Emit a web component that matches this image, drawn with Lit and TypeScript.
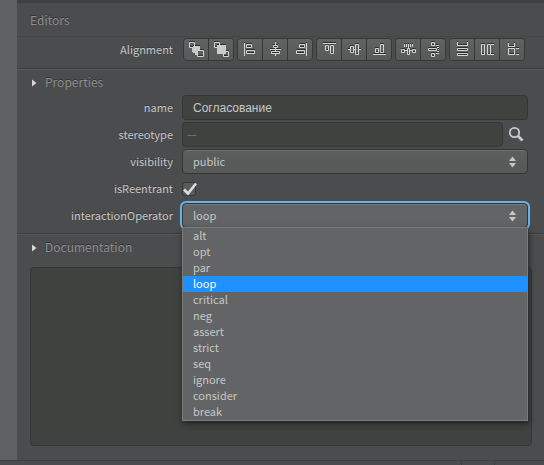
import { LitElement, html, css, svg } from "lit";
import { customElement, state } from "lit/decorators.js";
import { classMap } from "lit/directives/class-map.js";

const line = (d: string) => svg`<path class="line" d=${d} />`;
const fill = (d: string) => svg`<path class="fill" d=${d} />`;

const groups = [
  [
    { label: "Bring to front", art: [line("M0.5 0.5h5v5h-5zM8.5 8.5h6v6h-6z"), fill("M4 4h7v4H8v3H4zM3 6h1v3h1v1H3zM6 11h2v2H6z")] },
    { label: "Send to back", art: [line("M0.5 0.5h5v5h-5zM9.5 9.5h5v5h-5z"), fill("M3 3h9v9H3z")] },
  ],
  [
    { label: "Align left", art: [line("M1.5 1v13M3.5 2.5h5v3h-5zM3.5 8.5h8v3h-8z")] },
    { label: "Align center", art: [line("M7.5 0v3M7.5 6v3M7.5 12v2M5.5 3.5h4v2h-4zM3.5 9.5h8v2h-8zM2 7.5h11")] },
    { label: "Align right", art: [line("M13.5 1v13M6.5 2.5h5v3h-5zM3.5 8.5h8v3h-8z")] },
  ],
  [
    { label: "Align top", art: [line("M1 1.5h13M3.5 3.5h3v5h-3zM8.5 3.5h3v8h-3z")] },
    { label: "Align middle", art: [line("M1 7.5h2M6 7.5h3M12 7.5h2M3.5 4.5h3v6h-3zM8.5 2.5h3v10h-3z")] },
    { label: "Align bottom", art: [line("M1 12.5h13M3.5 6.5h3v4h-3zM8.5 2.5h3v8h-3z")] },
  ],
  [
    { label: "Distribute horizontally", art: [line("M3.5 2v3M5.5 2v3M7.5 2v4M9.5 2v3M11.5 2v3M0.5 7.5h3v3h-3zM6.5 6.5h2v6h-2zM11.5 7.5h3v3h-3zM4 8.500h2M9 8.500h2")] },
    { label: "Distribute vertically", art: [line("M5.5 0.5h3v3h-3zM2.5 6.5h8v2h-8zM5.5 11.5h3v3h-3zM10 3.5h3M11 5.500h2M12 7.5h1M11 9.5h2M10 11.5h3")] },
  ],
  [
    { label: "Same width", art: [line("M2.5 0v3M12.5 0v3M2 3.5h11M2.5 6.5h10v2h-10zM2.5 11.5h10v2h-10z")] },
    { label: "Same height", art: [line("M1.5 2.5h3v10h-3zM7.5 2.5h3v10h-3zM11 2.5h3M11 12.5h3")] },
    { label: "Same size", art: [line("M3.5 1v4M9.5 1v4M3.5 6.5h6v6h-6zM3 4.5h7M11 6.5h3M11 12.5h3")] },
  ],
];

const operators = ["alt", "opt", "par", "loop", "critical", "neg", "assert", "strict", "seq", "ignore", "consider", "break"];

@customElement("app-root")
export class AppRoot extends LitElement {
  @state() private operator = "loop";

  static styles = css`
    :host {
      display: flex;
      flex-direction: column;
      min-height: 100vh;
      background: #4b4c4e;
      color: #c6c8c8;
      font: 11px/16px "Noto Sans CJK SC", "Liberation Sans", sans-serif;
    }
    * { box-sizing: border-box; }
    button, input, select, textarea { font: inherit; color: inherit; margin: 0; }
    .main { flex: 1; display: flex; }
    .gutter { width: 17px; background: #5f6062; }
    .panel {
      flex: 1;
      min-width: 0;
      display: flex;
      flex-direction: column;
      border-top: 3px solid #3a4342;
    }
    h1, h2 {
      margin: 0;
      font-weight: 400;
      font-size: 12px;
      line-height: 20px;
      color: #8d8e8f;
      text-shadow: 0 -1px 0 #333;
    }
    h1 { padding: 7px 13px 6px; border-bottom: 1px solid #454648; }
    h2 { padding-bottom: 2px; }
    .row {
      display: grid;
      grid-template-columns: 156px minmax(0, 1fr);
      column-gap: 9px;
      align-items: center;
      min-height: 27px;
      padding-right: 16px;
    }
    .label { text-align: right; padding-bottom: 2px; text-shadow: 0 -1px 0 #3a3a3a; }
    .align { min-height: 31px; padding-bottom: 6px; }
    .tools { display: flex; gap: 3px; padding-left: 1px; }
    .group {
      display: flex;
      border: 1px solid #363837;
      border-radius: 4px;
      overflow: hidden;
    }
    .tool {
      width: 24px;
      height: 21px;
      padding: 0;
      border: 0;
      background: linear-gradient(#616362, #585a59);
      display: grid;
      place-items: center;
    }
    .tool + .tool { width: 25px; border-left: 1px solid #363837; }
    svg { display: block; overflow: visible; }
    .line { fill: none; stroke: #d4d6d5; }
    .fill { fill: #c9cbca; }
    .icon { filter: drop-shadow(0 -1px 0 #2c2d2d); }
    details { border-top: 1px solid #3a3b3d; box-shadow: inset 0 1px #58595b; }
    summary {
      display: flex;
      align-items: center;
      gap: 7px;
      height: 25px;
      padding: 3px 15px 0;
      list-style: none;
    }
    .fields { padding-bottom: 4px; }
    .box {
      width: 100%;
      height: 25px;
      border: 1px solid #343635;
      border-radius: 4px;
      background: #404240;
      padding: 0 10px;
      outline: 0;
    }
    .name { font-family: "Liberation Sans", sans-serif; font-size: 12px; }
    .picker { display: flex; align-items: center; gap: 4px; }
    .picker .box { flex: 1; min-width: 0; padding: 0 4px 2px; }
    .box::placeholder { color: #777978; opacity: 1; }
    .search { border: 0; padding: 0; background: none; width: 21px; height: 20px; }
    .combo { position: relative; display: flex; align-items: center; }
    .combo select {
      appearance: none;
      padding-bottom: 2px;
      background: linear-gradient(#5c5e5d, #575958);
      box-shadow: inset 0 1px #6e706f;
    }
    .arrows { position: absolute; right: 12px; fill: #c6c8c8; pointer-events: none; }
    .combo .focused {
      background: #636466;
      box-shadow: inset 0 1px #77797a, 0 0 0 2px #67b0ee;
    }
    .check {
      display: flex;
      width: 14px;
      height: 14px;
      position: relative;
    }
    .check input {
      appearance: none;
      width: 14px;
      height: 14px;
      border: 1px solid #343635;
      border-radius: 3px;
      background: #5a5c5b;
    }
    .check svg { position: absolute; left: 0; top: 0; pointer-events: none; display: none; }
    .check input:checked + svg { display: block; }
    .menu {
      position: absolute;
      z-index: 1;
      top: calc(100% - 1px);
      left: 0;
      right: 0;
      margin: 0;
      padding: 0;
      list-style: none;
      background: #626466;
      border: 1px solid #7a7c7c;
      box-shadow: 1px 3px 6px #222;
    }
    .menu li { padding: 0 10px; height: 16px; line-height: 14px; }
    .menu .chosen { background: #1e90ff; color: #fff; }
    .notes { flex: 1; display: flex; padding: 8px 12px 14px 13px; }
    .notes textarea {
      flex: 1;
      height: auto;
      min-height: 120px;
      resize: none;
      padding: 8px;
    }
    .status {
      height: 5px;
      border-top: 1px solid #3a4342;
      display: flex;
      justify-content: flex-end;
      padding-right: 49px;
    }
    .status i { width: 33px; border-left: 1px solid #3a4342; }
    .status i + i { width: 1px; }
  `;

  private arrow() {
    return html`<svg width="6" height="8" viewBox="0 0 6 8" aria-hidden="true"><path d="M0 0.500L4.500 4L0 7.500z" fill="#d6d8d8" /></svg>`;
  }

  private arrows() {
    return html`<svg class="arrows" width="7" height="12" viewBox="0 0 7 12" aria-hidden="true"><path d="M0 5L3.500 0.500L7 5zM0 7h7L3.500 11.500z" /></svg>`;
  }

  render() {
    return html`
      <div class="main">
        <div class="gutter"></div>
        <div class="panel">
          <h1>Editors</h1>
          <div class="row align">
            <span class="label" id="alignment">Alignment</span>
            <div class="tools" role="toolbar" aria-labelledby="alignment">
              ${groups.map((group) => html`
                <div class="group">
                  ${group.map((tool) => html`
                    <button class="tool" aria-label=${tool.label}>
                      <svg class="icon" width="15" height="15" viewBox="0 0 15 15" aria-hidden="true">${tool.art}</svg>
                    </button>`)}
                </div>`)}
            </div>
          </div>
          <details @click=${(e: Event) => e.preventDefault()}>
            <summary>${this.arrow()}<h2>Properties</h2></summary>
          </details>
          <div class="fields">
            <div class="row">
              <label class="label" for="name">name</label>
              <input class="box name" id="name" .value=${"Согласование"} />
            </div>
            <div class="row">
              <label class="label" for="stereotype">stereotype</label>
              <div class="picker">
                <input class="box" id="stereotype" placeholder="—" />
                <button class="search" aria-label="Find stereotype">
                  <svg width="20" height="20" viewBox="0 0 20 20" fill="none" stroke="#c9cbca" aria-hidden="true">
                    <circle cx="7.500" cy="7.500" r="4.700" stroke-width="1.800" />
                    <path d="M11 11l4.500 4.500" stroke-width="2.600" />
                  </svg>
                </button>
              </div>
            </div>
            <div class="row">
              <label class="label" for="visibility">visibility</label>
              <div class="combo">
                <select class="box" id="visibility"><option>public</option></select>
                ${this.arrows()}
              </div>
            </div>
            <div class="row">
              <label class="label" for="reentrant">isReentrant</label>
              <div class="check">
                <input type="checkbox" id="reentrant" checked />
                <svg width="16" height="14" viewBox="0 0 16 14" aria-hidden="true"><path d="M2 7.500L6 11.500L14 1.500" fill="none" stroke="#dcdddd" stroke-width="2.600" /></svg>
              </div>
            </div>
            <div class="row">
              <label class="label" for="operator">interactionOperator</label>
              <div class="combo">
                <select class="box focused" id="operator">
                  ${operators.map((o) => html`<option ?selected=${o === this.operator}>${o}</option>`)}
                </select>
                ${this.arrows()}
                <ul class="menu" role="listbox" aria-label="interactionOperator">
                  ${operators.map((o) => html`
                    <li role="option" aria-selected=${o === this.operator}
                        class=${classMap({ chosen: o === this.operator })}
                        @click=${() => (this.operator = o)}>${o}</li>`)}
                </ul>
              </div>
            </div>
          </div>
          <details @click=${(e: Event) => e.preventDefault()}>
            <summary>${this.arrow()}<h2>Documentation</h2></summary>
          </details>
          <div class="notes"><textarea class="box" aria-label="Documentation"></textarea></div>
        </div>
      </div>
      <div class="status"><i></i><i></i></div>
    `;
  }
}
